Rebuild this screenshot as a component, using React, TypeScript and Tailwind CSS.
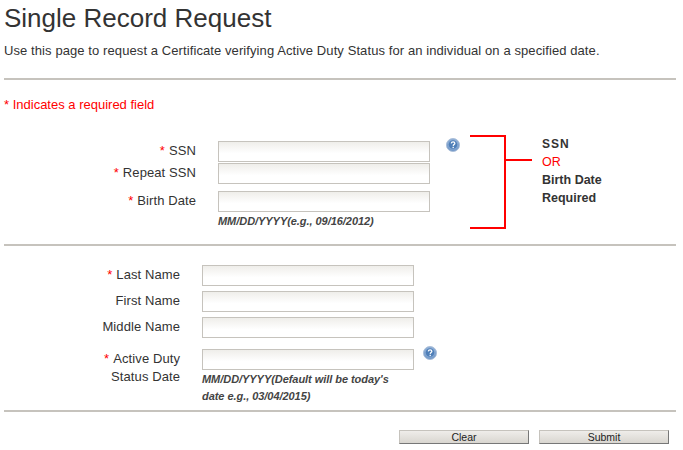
import React from "react";

function Req() {
  return <span className="text-[#ff0000] mr-1">*</span>;
}

function TextBox() {
  return (
    <input
      type="text"
      className="block w-[212px] h-[21px] border border-[#c6c3bd] bg-gradient-to-b from-[#efeeea] to-white to-60%"
    />
  );
}

function HelpIcon() {
  return (
    <svg width="14" height="14" viewBox="0 0 15 15" className="block">
      <defs>
        <radialGradient id="helpFill" cx="50%" cy="35%" r="65%">
          <stop offset="0%" stopColor="#a9c2e2" />
          <stop offset="100%" stopColor="#6d95c6" />
        </radialGradient>
      </defs>
      <circle cx="7.5" cy="7.5" r="7" fill="url(#helpFill)" stroke="#a9bdd8" />
      <circle cx="7.5" cy="7" r="4.6" fill="#4f7fb8" />
      <path d="M5.6 5.8c.2-1.2 1-1.7 2-1.7s1.9.6 1.9 1.6c0 1.3-1.7 1.3-1.8 2.7" fill="none" stroke="#fff" strokeWidth="1.3" />
      <rect x="7" y="9.4" width="1.4" height="1.4" fill="#fff" />
    </svg>
  );
}

function Hr() {
  return <hr className="ml-1 mr-[7px] h-0.5 border-0 bg-[#c6c3bd]" />;
}

function ActionButton({ label }: { label: string }) {
  return (
    <button
      type="button"
      className="w-[130px] h-[14px] flex items-center justify-center text-[10.5px] leading-none text-[#222] bg-gradient-to-b from-[#efedea] to-[#d9d6d0] border border-[#c6c3bd] border-r-[#777] border-b-[#777]"
    >
      {label}
    </button>
  );
}

export default function App() {
  return (
    <div className="w-[683px] h-[450px] overflow-hidden bg-white text-[#333] font-['Liberation_Sans',Arial,sans-serif] text-[13px]">
      <h1 className="pl-1 pt-[2px] h-[36px] text-[26px] leading-[32px] font-normal">Single Record Request</h1>
      <p className="pl-1 mt-[7px] h-[16px] leading-[16px] tracking-[0.09px]">
        Use this page to request a Certificate verifying Active Duty Status for an individual on a specified date.
      </p>
      <div className="h-[19px]" />
      <Hr />
      <p className="pl-1 mt-[17px] h-[16px] leading-[16px] text-[#ff0000]">* Indicates a required field</p>

      <div className="flex mt-[23px] h-[103px]">
        <div className="w-[196px] pt-[2px] text-right leading-[16px] tracking-[0.09px]">
          <div className="h-[22px] pt-[5px]"><Req />SSN</div>
          <div className="h-[28px] pt-[5px]"><Req />Repeat SSN</div>
          <div className="h-[20px] pt-[5px]"><Req />Birth Date</div>
        </div>
        <div className="ml-[22px] w-[212px] pt-[5px]">
          <TextBox />
          <div className="mt-[1px]"><TextBox /></div>
          <div className="mt-[7px]"><TextBox /></div>
          <p className="mt-[2px] text-[11px] leading-[14px] italic font-bold text-[#444] tracking-[-0.05px]">MM/DD/YYYY(e.g., 09/16/2012)</p>
        </div>
        <div className="ml-[16px] pt-[2px]"><HelpIcon /></div>
        <div className="ml-[10px] -mt-[1px] relative w-[36px] h-[94px] border-y-2 border-r-2 border-[#ff0000]">
          <div className="absolute left-[34px] top-[22px] w-[28px] h-[2px] bg-[#ff0000]" />
        </div>
        <div className="ml-[36px] -mt-[1px] font-bold text-[12.5px] leading-[18px]">
          <div className="tracking-[1px] text-[12px]">SSN</div>
          <div className="font-normal text-[#ff0000]">OR</div>
          <div>Birth Date</div>
          <div>Required</div>
        </div>
      </div>

      <div className="h-[5px]" />
      <Hr />

      <div className="flex mt-[19px] h-[145px]">
        <div className="w-[180px] text-right leading-[16px] tracking-[0.09px]">
          <div className="h-[26px] pt-[2px]"><Req />Last Name</div>
          <div className="h-[26px] pt-[2px]">First Name</div>
          <div className="h-[32px] pt-[2px]">Middle Name</div>
          <div className="pt-[2px]"><Req />Active Duty</div>
          <div className="pt-[2px]">Status Date</div>
        </div>
        <div className="ml-[22px] w-[212px]">
          <TextBox />
          <div className="mt-[5px]"><TextBox /></div>
          <div className="mt-[5px]"><TextBox /></div>
          <div className="mt-[11px]"><TextBox /></div>
          <p className="mt-[1px] text-[11px] leading-[17px] italic font-bold text-[#444] tracking-[-0.05px]">
            MM/DD/YYYY(Default will be today's date e.g., 03/04/2015)
          </p>
        </div>
        <div className="ml-[9px] pt-[81px]"><HelpIcon /></div>
      </div>

      <Hr />
      <div className="flex justify-end gap-[10px] mt-[18px] pr-[14px]">
        <ActionButton label="Clear" />
        <ActionButton label="Submit" />
      </div>
    </div>
  );
}
